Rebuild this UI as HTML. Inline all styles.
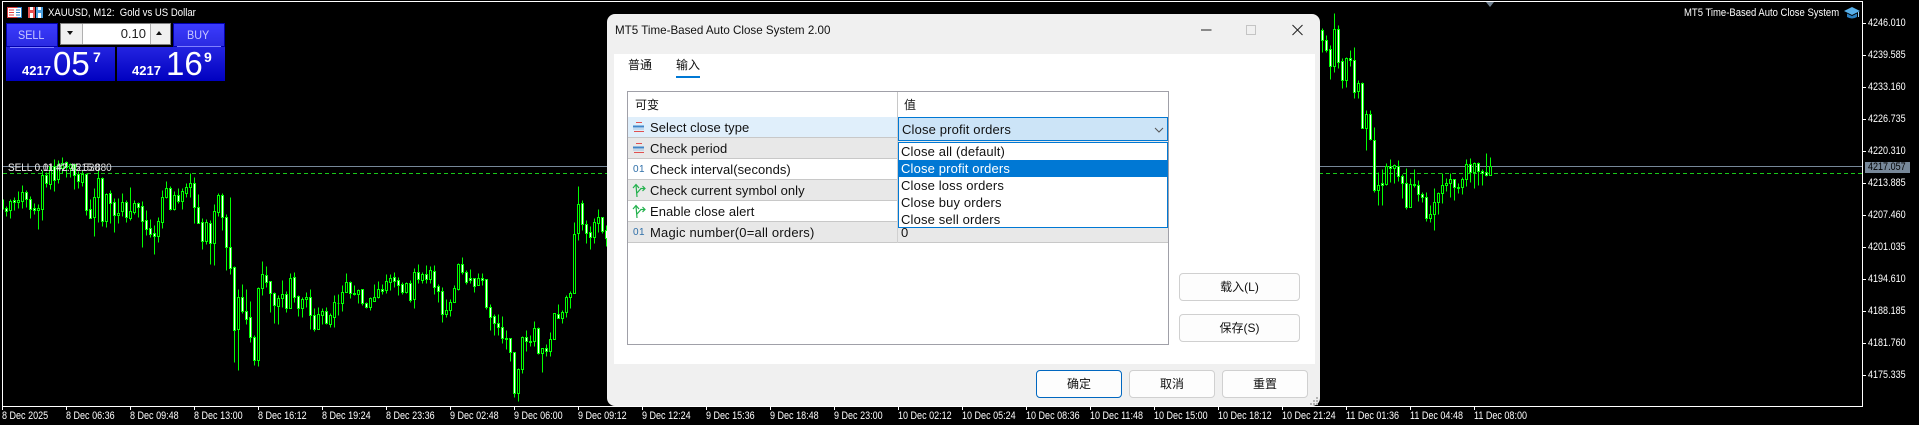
<!DOCTYPE html>
<html><head><meta charset="utf-8"><title>MT5 Time-Based Auto Close System</title>
<style>
html,body{margin:0;padding:0;background:#000;width:1919px;height:425px;overflow:hidden}
body{position:relative;font-family:"Liberation Sans","Noto Sans CJK SC",sans-serif;color:#000}
.a{position:absolute;white-space:nowrap}
.ax{position:absolute;white-space:nowrap;color:#fff;font-size:11px;line-height:12px;height:12px;transform-origin:0 50%;transform:scaleX(.82)}
.row{position:absolute;left:628px;width:540px;height:20px;border-bottom:1px solid #c8c8c8}
.rt{position:absolute;left:650px;font-size:13px;line-height:21px;white-space:nowrap;color:#111;letter-spacing:.06px}
.ic01{position:absolute;left:633px;font-size:10px;line-height:21px;color:#2f6fa8;letter-spacing:.5px}
.btn{position:absolute;box-sizing:border-box;background:#fdfdfd;border:1px solid #d0d0d0;border-radius:4px;text-align:center;font-size:12px;color:#111;line-height:26px}
.dd{position:absolute;left:899px;width:268px;height:17px;line-height:17px;font-size:13px;padding-left:2px;box-sizing:border-box;color:#111;white-space:nowrap;letter-spacing:.15px}
</style></head>
<body>
<svg id="chart" class="a" style="left:0;top:0" width="1919" height="425" viewBox="0 0 1919 425">
<rect x="2" y="1" width="1861" height="1" fill="#fff"/>
<rect x="2" y="1" width="1" height="406" fill="#fff"/>
<rect x="1862" y="1" width="1" height="406" fill="#fff"/>
<rect x="2" y="406" width="1861" height="1" fill="#fff"/>
<rect x="3" y="166" width="1859" height="1" fill="#778899"/>
<line x1="3" y1="173.5" x2="1862" y2="173.5" stroke="#19c819" stroke-dasharray="4 3"/>
<polygon points="1486,2 1494,2 1490,7" fill="#708090"/>
<g id="cw" stroke="#00ff00" fill="none" transform="translate(.5,.5)"><path d="M3 199V209"/></g>
<g id="cb" stroke="#00ff00" fill="#000" transform="translate(.5,.5)"></g>
<g id="cf" stroke="#fff" fill="none" transform="translate(.5,0)"></g>
<path d="M1862 23h4M1862 55h4M1862 87h4M1862 119h4M1862 151h4M1862 183h4M1862 215h4M1862 247h4M1862 279h4M1862 311h4M1862 343h4M1862 375h4" stroke="#fff" transform="translate(0,.5)"/>
<path d="M2 406v4M66 406v4M130 406v4M194 406v4M258 406v4M322 406v4M386 406v4M450 406v4M514 406v4M578 406v4M642 406v4M706 406v4M770 406v4M834 406v4M898 406v4M962 406v4M1026 406v4M1090 406v4M1154 406v4M1218 406v4M1282 406v4M1346 406v4M1410 406v4M1474 406v4" stroke="#fff" transform="translate(.5,0)"/>
</svg>

<!-- overlay labels -->
<div class="ax" style="left:8px;top:162px;color:#ddd;transform:scaleX(.9)">SELL 0.01 #2 4215.880</div>
<div class="ax" style="left:8px;top:162px;color:#ddd;transform:scaleX(.9)">SELL 0.11 42.15.530</div>

<!-- top-left icons and title -->
<svg class="a" style="left:7px;top:7px" width="15" height="11" viewBox="0 0 15 11">
<rect width="15" height="11" fill="#fff"/><rect x=".5" y=".5" width="14" height="10" fill="none" stroke="#d83b3b"/>
<path d="M10.5 .5h4v10h-4" fill="none" stroke="#2a7fc8"/>
<path d="M2 3h5M2 5.5h5M2 8h5" stroke="#e04040"/><path d="M9 3h4M9 5.5h4M9 8h4" stroke="#2a7fc8"/></svg>
<svg class="a" style="left:28px;top:7px" width="15" height="11" viewBox="0 0 15 11">
<rect width="7" height="11" fill="#e85050"/><rect x="2" y="0" width="3" height="3" fill="#fff"/><rect x="2" y="6" width="3" height="5" fill="#fff"/>
<rect x="8" width="7" height="11" fill="#4aa0e0"/><rect x="10" y="0" width="3" height="3" fill="#fff"/><rect x="10" y="6" width="3" height="5" fill="#fff"/></svg>
<div class="ax" style="left:48px;top:7px;transform:scaleX(.87);white-space:pre">XAUUSD, M12:  Gold vs US Dollar</div>

<!-- trade panel -->
<div class="a" style="left:6px;top:23px;width:52px;height:24px;background:linear-gradient(#3c3cff,#2a2ae0);box-shadow:inset 0 0 0 1px #0000b0"></div>
<div class="a" style="left:173px;top:23px;width:52px;height:24px;background:linear-gradient(#3c3cff,#2a2ae0);box-shadow:inset 0 0 0 1px #0000b0"></div>
<div class="a" style="left:18px;top:27px;font-size:12px;line-height:16px;color:#c8c8ff;transform-origin:0 50%;transform:scaleX(.9)">SELL</div>
<div class="a" style="left:187px;top:27px;font-size:12px;line-height:16px;color:#c8c8ff;transform-origin:0 50%;transform:scaleX(.9)">BUY</div>
<div class="a" style="left:6px;top:47px;width:109px;height:34px;background:linear-gradient(#2424e0,#0000c0)"></div>
<div class="a" style="left:117px;top:47px;width:108px;height:34px;background:linear-gradient(#2424e0,#0000c0)"></div>
<div class="a" style="left:10px;top:47px;width:44px;height:1px;background:#8080ff"></div>
<div class="a" style="left:177px;top:46px;width:44px;height:1px;background:#8080ff"></div>
<div class="a" style="left:22px;top:64px;font-size:13px;font-weight:bold;line-height:14px;color:#fff">4217</div>
<div class="a" style="left:53px;top:46px;font-size:33px;line-height:36px;color:#fff">05</div>
<div class="a" style="left:93px;top:49px;font-size:14px;font-weight:bold;line-height:16px;color:#fff">7</div>
<div class="a" style="left:132px;top:64px;font-size:13px;font-weight:bold;line-height:14px;color:#fff">4217</div>
<div class="a" style="left:166px;top:46px;font-size:33px;line-height:36px;color:#fff">16</div>
<div class="a" style="left:204px;top:49px;font-size:14px;font-weight:bold;line-height:16px;color:#fff">9</div>
<div class="a" style="left:60px;top:23px;width:111px;height:22px;box-sizing:border-box;background:#f0f0f0;border:1px solid #808080"></div>
<div class="a" style="left:82px;top:24px;width:67px;height:20px;background:#fff;border-left:1px solid #b0b0b0;border-right:1px solid #b0b0b0"></div>
<div class="a" style="left:100px;top:25px;width:46px;text-align:right;font-size:13px;line-height:17px;color:#222">0.10</div>
<svg class="a" style="left:66px;top:30px" width="100" height="7" viewBox="0 0 100 7"><polygon points="1,1 7,1 4,5" fill="#111"/><polygon points="90,5 96,5 93,1" fill="#111"/></svg>

<!-- right label -->
<div class="ax" style="left:1684px;top:7px;transform:scaleX(.863)">MT5 Time-Based Auto Close System</div>
<svg class="a" style="left:1844px;top:7px" width="16" height="13" viewBox="0 0 16 13">
<path d="M3 6.5V10Q8 13 13 10V6.5L8 9z" fill="#2a7fc0"/><path d="M0 4L8 0l8 4-8 4z" fill="#59b0ea"/><path d="M14.5 5v5" stroke="#9bd0f5"/></svg>

<!-- price axis -->
<div class="ax" style="left:1868px;top:17px">4246.010</div>
<div class="ax" style="left:1868px;top:49px">4239.585</div>
<div class="ax" style="left:1868px;top:81px">4233.160</div>
<div class="ax" style="left:1868px;top:113px">4226.735</div>
<div class="ax" style="left:1868px;top:145px">4220.310</div>
<div class="ax" style="left:1868px;top:177px">4213.885</div>
<div class="ax" style="left:1868px;top:209px">4207.460</div>
<div class="ax" style="left:1868px;top:241px">4201.035</div>
<div class="ax" style="left:1868px;top:273px">4194.610</div>
<div class="ax" style="left:1868px;top:305px">4188.185</div>
<div class="ax" style="left:1868px;top:337px">4181.760</div>
<div class="ax" style="left:1868px;top:369px">4175.335</div>
<div class="a" style="left:1865px;top:162px;width:45px;height:11px;background:#778899"></div>
<div class="ax" style="left:1868px;top:161px;color:#000">4217.057</div>

<!-- time axis -->
<div class="ax" style="left:2px;top:410px">8 Dec 2025</div>
<div class="ax" style="left:66px;top:410px">8 Dec 06:36</div>
<div class="ax" style="left:130px;top:410px">8 Dec 09:48</div>
<div class="ax" style="left:194px;top:410px">8 Dec 13:00</div>
<div class="ax" style="left:258px;top:410px">8 Dec 16:12</div>
<div class="ax" style="left:322px;top:410px">8 Dec 19:24</div>
<div class="ax" style="left:386px;top:410px">8 Dec 23:36</div>
<div class="ax" style="left:450px;top:410px">9 Dec 02:48</div>
<div class="ax" style="left:514px;top:410px">9 Dec 06:00</div>
<div class="ax" style="left:578px;top:410px">9 Dec 09:12</div>
<div class="ax" style="left:642px;top:410px">9 Dec 12:24</div>
<div class="ax" style="left:706px;top:410px">9 Dec 15:36</div>
<div class="ax" style="left:770px;top:410px">9 Dec 18:48</div>
<div class="ax" style="left:834px;top:410px">9 Dec 23:00</div>
<div class="ax" style="left:898px;top:410px">10 Dec 02:12</div>
<div class="ax" style="left:962px;top:410px">10 Dec 05:24</div>
<div class="ax" style="left:1026px;top:410px">10 Dec 08:36</div>
<div class="ax" style="left:1090px;top:410px">10 Dec 11:48</div>
<div class="ax" style="left:1154px;top:410px">10 Dec 15:00</div>
<div class="ax" style="left:1218px;top:410px">10 Dec 18:12</div>
<div class="ax" style="left:1282px;top:410px">10 Dec 21:24</div>
<div class="ax" style="left:1346px;top:410px">11 Dec 01:36</div>
<div class="ax" style="left:1410px;top:410px">11 Dec 04:48</div>
<div class="ax" style="left:1474px;top:410px">11 Dec 08:00</div>

<!-- dialog -->
<div class="a" style="left:607px;top:14px;width:713px;height:392px;background:#f0f0f0;border-radius:8px"></div>
<div class="a" style="left:615px;top:22px;font-size:12px;line-height:16px;color:#111;transform-origin:0 50%;transform:scaleX(.967)">MT5 Time-Based Auto Close System 2.00</div>
<svg class="a" style="left:1195px;top:20px" width="115" height="20" viewBox="0 0 115 20">
<path d="M6 10h10.5" stroke="#222" fill="none"/><rect x="51.5" y="5.5" width="9" height="9" fill="none" stroke="#c4c4c4"/>
<path d="M97.5 5l10 10M107.5 5l-10 10" stroke="#222" fill="none"/></svg>
<div class="a" style="left:614px;top:54px;width:701px;height:310px;background:#fff"></div>
<div class="a" style="left:628px;top:57px;font-size:12px;line-height:16px;color:#111">普通</div>
<div class="a" style="left:676px;top:57px;font-size:12px;line-height:16px;color:#111">输入</div>
<div class="a" style="left:676px;top:76px;width:24px;height:2px;background:#0078d4"></div>

<!-- table -->
<div class="a" style="left:627px;top:91px;width:542px;height:254px;box-sizing:border-box;border:1px solid #a0a0a8;background:#fff"></div>
<div class="a" style="left:635px;top:97px;font-size:12px;line-height:16px;color:#111">可变</div>
<div class="a" style="left:904px;top:97px;font-size:12px;line-height:16px;color:#111">值</div>
<div class="a" style="left:897px;top:92px;width:1px;height:25px;background:#c8c8c8"></div>
<div class="row" style="top:117px;background:#e0effb"></div>
<div class="row" style="top:138px;background:#e8e8e8"></div>
<div class="row" style="top:159px;background:#fff"></div>
<div class="row" style="top:180px;background:#e8e8e8"></div>
<div class="row" style="top:201px;background:#fff"></div>
<div class="row" style="top:222px;background:#e8e8e8"></div>
<div class="a" style="left:897px;top:117px;width:1px;height:126px;background:#d0d0d0"></div>

<svg class="a" style="left:633px;top:121px" width="12" height="13" viewBox="0 0 12 13"><path d="M3 1.5h6" stroke="#e05050"/><path d="M0 5.5h11" stroke="#3f86c8" stroke-width="2"/><path d="M0 8h11" stroke="#9fc3e3"/><path d="M1 10.5h10" stroke="#e05050"/></svg>
<svg class="a" style="left:633px;top:142px" width="12" height="13" viewBox="0 0 12 13"><path d="M3 1.5h6" stroke="#e05050"/><path d="M0 5.5h11" stroke="#3f86c8" stroke-width="2"/><path d="M0 8h11" stroke="#9fc3e3"/><path d="M1 10.5h10" stroke="#e05050"/></svg>
<div class="ic01" style="top:159px">01</div>
<svg class="a" style="left:632px;top:183px" width="14" height="15" viewBox="0 0 14 15" fill="none" stroke="#22b14c" stroke-width="1.2"><path d="M5 14L4 2M1 5l3-3.5L7 5M5 10L9 5.5h4M10.5 3l2.5 2.5L10.5 8"/></svg>
<svg class="a" style="left:632px;top:204px" width="14" height="15" viewBox="0 0 14 15" fill="none" stroke="#22b14c" stroke-width="1.2"><path d="M5 14L4 2M1 5l3-3.5L7 5M5 10L9 5.5h4M10.5 3l2.5 2.5L10.5 8"/></svg>
<div class="ic01" style="top:222px">01</div>

<div class="rt" style="top:117px">Select close type</div>
<div class="rt" style="top:138px">Check period</div>
<div class="rt" style="top:159px">Check interval(seconds)</div>
<div class="rt" style="top:180px">Check current symbol only</div>
<div class="rt" style="top:201px">Enable close alert</div>
<div class="rt" style="top:222px;letter-spacing:.2px">Magic number(0=all orders)</div>
<div class="rt" style="top:222px;left:901px">0</div>

<!-- combo -->
<div class="a" style="left:898px;top:117px;width:270px;height:24px;box-sizing:border-box;background:#cce4f7;border:1px solid #0078d4"></div>
<div class="a" style="left:902px;top:121px;font-size:13px;line-height:18px;color:#111;letter-spacing:.15px">Close profit orders</div>
<svg class="a" style="left:1154px;top:127px" width="10" height="6" viewBox="0 0 10 6"><path d="M1 1l4 4 4-4" stroke="#555" fill="none"/></svg>
<div class="a" style="left:898px;top:142px;width:270px;height:86px;box-sizing:border-box;background:#fff;border:1px solid #0078d4"></div>
<div class="dd" style="top:143px">Close all (default)</div>
<div class="dd" style="top:160px;background:#0078d4;color:#fff">Close profit orders</div>
<div class="dd" style="top:177px">Close loss orders</div>
<div class="dd" style="top:194px">Close buy orders</div>
<div class="dd" style="top:211px">Close sell orders</div>

<!-- buttons -->
<div class="btn" style="left:1179px;top:273px;width:121px;height:28px">载入(L)</div>
<div class="btn" style="left:1179px;top:314px;width:121px;height:28px">保存(S)</div>
<div class="btn" style="left:1036px;top:370px;width:86px;height:28px;border-color:#0067c0">确定</div>
<div class="btn" style="left:1129px;top:370px;width:86px;height:28px">取消</div>
<div class="btn" style="left:1222px;top:370px;width:86px;height:28px">重置</div>
<svg class="a" style="left:1309px;top:396px" width="10" height="10" viewBox="0 0 10 10" fill="#b4b4b4"><rect x="7" y="1" width="2" height="2"/><rect x="4" y="4" width="2" height="2"/><rect x="7" y="4" width="2" height="2"/><rect x="1" y="7" width="2" height="2"/><rect x="4" y="7" width="2" height="2"/><rect x="7" y="7" width="2" height="2"/></svg>

<script>
var L=[206,216,208,211,1,199,218,201,210,0,197,210,200,202,1,191,208,200,202,0,185,208,192,201,0,190,207,192,199,1,196,218,199,209,1,203,214,208,210,1,204,229,208,210,0,170,220,175,209,0,172,187,175,183,1,165,189,166,184,0,159,191,166,180,1,160,183,164,179,0,157,173,163,168,0,161,177,162,167,1,163,177,164,168,0,164,189,164,175,1,171,188,174,181,1,170,186,174,182,0,173,215,174,210,1,199,218,209,218,1,188,236,197,217,0,170,222,178,197,0,177,226,178,221,1,193,227,194,221,0,190,223,193,203,1,198,232,202,215,1,198,223,213,215,0,193,216,202,211,0,200,222,202,217,1,187,220,211,218,0,200,214,203,212,0,202,217,203,207,1,201,247,206,221,1,210,235,220,229,1,219,237,228,234,1,225,254,233,236,1,217,242,221,236,0,190,228,197,222,0,181,198,188,197,0,186,210,188,209,1,191,210,195,209,0,188,203,195,201,1,188,209,191,201,0,183,197,187,193,0,173,197,183,187,0,177,223,183,207,1,194,223,207,223,1,218,249,222,241,1,219,244,222,241,0,220,264,223,243,1,204,265,211,243,0,193,216,195,212,0,193,230,195,217,1,214,270,217,247,1,197,274,247,268,1,266,362,267,330,1,289,370,297,329,0,284,313,297,311,1,289,324,311,319,1,301,342,317,337,1,335,365,337,360,1,287,366,288,360,0,261,295,274,288,0,266,287,275,282,1,281,312,281,293,1,292,323,293,305,1,295,324,298,306,0,280,307,294,298,0,291,312,294,308,1,273,308,278,308,0,272,302,277,297,1,295,316,296,308,1,297,317,299,308,0,292,307,297,299,0,289,329,297,315,1,308,331,315,329,1,307,329,314,329,0,308,324,311,315,0,307,324,311,323,1,313,327,315,324,0,295,327,302,317,0,294,315,303,303,0,285,311,292,303,0,273,292,282,292,0,281,298,282,293,1,285,295,293,294,1,289,303,290,294,0,289,305,289,303,1,302,308,303,307,1,297,310,298,307,0,284,301,297,301,0,281,298,289,297,0,284,294,289,291,1,274,293,281,290,0,274,290,278,282,0,272,287,277,281,1,277,295,280,285,1,282,294,284,292,1,282,293,283,292,0,280,302,283,300,1,268,308,272,299,0,264,283,272,279,1,272,283,274,280,0,265,283,274,279,1,266,283,270,279,0,265,294,271,287,1,284,302,286,291,1,287,322,291,314,1,299,317,310,314,0,299,316,302,310,0,285,302,288,302,0,263,290,264,289,0,257,274,264,272,1,270,284,272,282,1,269,283,278,280,1,278,292,278,286,1,273,285,278,285,0,273,285,278,280,1,279,309,279,307,1,304,330,307,317,1,314,335,316,323,1,314,335,323,327,1,316,343,327,338,1,330,349,338,339,1,338,361,338,352,1,352,397,352,393,1,368,401,369,393,0,336,373,337,369,0,330,351,337,341,1,335,346,341,342,1,321,346,328,341,0,327,354,328,353,1,348,372,348,353,0,344,356,348,351,1,332,356,339,351,0,313,339,313,339,0,304,318,314,318,1,310,323,312,318,0,295,317,297,312,0,291,308,293,297,0,222,293,234,293,0,186,240,204,233,0,200,230,203,224,1,220,243,224,233,1,226,249,232,237,1,218,243,222,237,0,209,232,217,223,0,217,233,217,231,1,225,246,230,238,1];
var R=[28,52,30,40,1,35,52,40,50,1,45,79,49,66,1,13,72,29,66,0,25,68,29,62,1,58,88,61,80,1,57,87,58,80,0,50,66,58,60,1,47,98,60,92,1,80,98,83,91,0,82,128,83,128,1,110,150,114,128,0,110,140,114,139,1,127,192,140,190,1,172,205,185,190,0,169,205,183,185,1,163,185,166,184,0,159,182,166,168,1,164,183,165,168,0,160,181,166,176,1,174,198,176,183,1,168,209,183,207,1,178,207,184,207,0,169,187,184,185,1,180,201,185,194,1,192,202,194,197,1,192,221,197,218,1,205,222,214,218,0,188,230,202,214,0,192,214,193,202,0,173,203,185,193,0,178,191,183,185,0,173,197,179,183,0,179,200,179,187,1,183,193,187,188,1,177,194,179,187,0,159,186,164,179,0,158,182,164,172,1,162,188,163,172,0,162,185,163,171,1,169,185,171,173,1,153,176,172,175,1,157,175,166,175,0];
var w='',b='',f='';
function draw(A,x0){for(var i=0;i<A.length;i+=5){var x=x0+(i/5)*4,h=A[i],l=A[i+1],t=A[i+2],o=A[i+3],k=A[i+4];
w+='M'+x+' '+h+'V'+l;
b+='M'+(x-1)+' '+t+'h2V'+o+'h-2z';
if(k&&o-t>=2)f+='M'+x+' '+(t+1)+'V'+o;}}
draw(L,6);draw(R,1322);
function add(id,d){var p=document.createElementNS('http://www.w3.org/2000/svg','path');p.setAttribute('d',d);document.getElementById(id).appendChild(p);}
add('cw',w);add('cb',b);add('cf',f);
</script>
</body></html>
